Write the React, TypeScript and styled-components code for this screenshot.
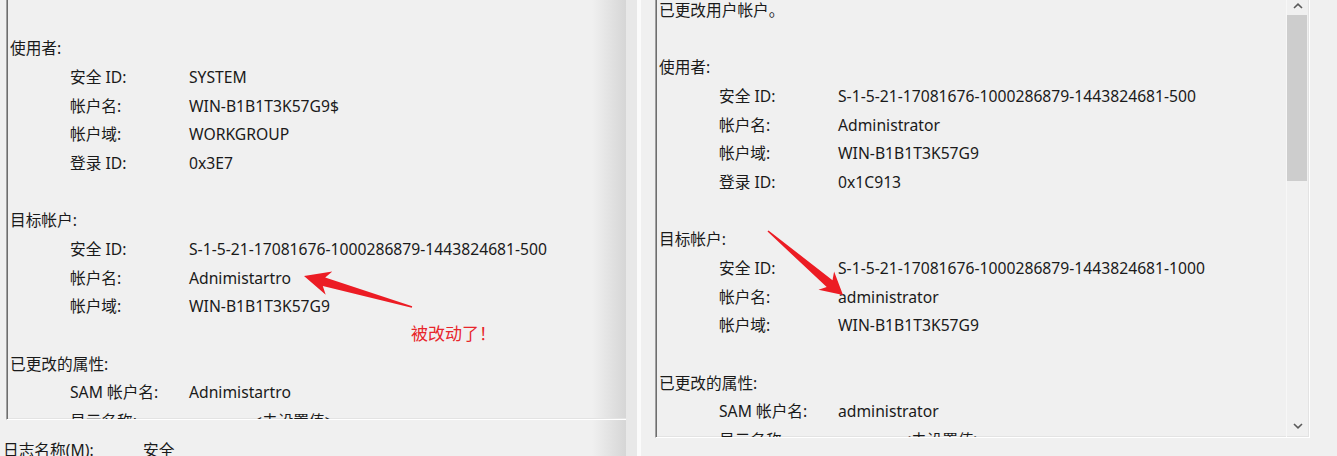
import React from "react";
import styled, { createGlobalStyle } from "styled-components";

const FONT = `"Noto Sans", "Noto Sans CJK SC", sans-serif`;

const GlobalStyle = createGlobalStyle`
  html, body { margin: 0; padding: 0; background: #f0f0f0; }
  body { width: 1337px; height: 456px; overflow: hidden; font-family: ${FONT}; }
  * { box-sizing: border-box; }
`;

const Screen = styled.div`
  position: relative;
  display: flex;
  width: 1337px;
  height: 456px;
  overflow: hidden;
  background: #f0f0f0;
  color: #1a1a1a;
  font-family: ${FONT};
  font-size: 15.7px;
`;

const LeftPane = styled.section`
  width: 626px;
  flex: none;
  display: flex;
  flex-direction: column;
  overflow: hidden;
  background: linear-gradient(
    to right,
    #f0f0f0 0,
    #f0f0f0 calc(100% - 34px),
    #d6d6d6 100%
  );
`;

const Splitter = styled.div`
  width: 15px;
  flex: none;
  background: #e8e8e8;
  border-right: 4px solid #fbfbfb;
`;

const RightPane = styled.section`
  flex: 1;
  display: flex;
  flex-direction: column;
  padding-left: 14px;
`;

const DetailBox = styled.div<{ $height: number; $closed?: boolean }>`
  height: ${(p) => p.$height}px;
  flex: none;
  display: flex;
  overflow: hidden;
  border-left: 1px solid #a0a0a0;
  border-bottom: 1px solid #ffffff;
  border-right: ${(p) => (p.$closed ? "1px solid #ffffff" : "none")};
  box-shadow: inset 1px 0 0 #6e6e6e, inset 0 -1px 0 #e3e3e3
    ${(p) => (p.$closed ? ", inset -1px 0 0 #e3e3e3" : "")};
`;

const LeftBox = styled(DetailBox)`
  margin-left: 6px;
`;

const RightBox = styled(DetailBox)`
  width: 655px;
`;

const TextArea = styled.div`
  flex: 1;
  min-width: 0;
  overflow: hidden;
  padding-left: 3px;
`;

const TextFlow = styled.div<{ $scroll: number }>`
  margin-top: ${(p) => -p.$scroll}px;
`;

const Line = styled.div`
  height: 28.67px;
  line-height: 28.67px;
  white-space: nowrap;
`;

const FieldLine = styled(Line)`
  display: flex;
  padding-left: 60px;
`;

const FieldLabel = styled.span`
  width: 119px;
  flex: none;
`;

const FieldValue = styled.span<{ $indent?: number }>`
  padding-left: ${(p) => p.$indent ?? 0}px;
`;

const ScrollBar = styled.div`
  width: 22px;
  flex: none;
  margin-right: 1px;
  display: flex;
  flex-direction: column;
  border-left: 1px solid #f7f7f7;
`;

const ScrollButton = styled.div<{ $h: number }>`
  height: ${(p) => p.$h}px;
  flex: none;
  display: flex;
  align-items: center;
  justify-content: center;
  padding-bottom: 4px;
`;

const ScrollThumb = styled.div`
  width: 20px;
  height: 166px;
  background: #cdcdcd;
  flex: none;
`;

const ScrollTrack = styled.div`
  flex: 1;
`;

const BottomField = styled.div`
  display: flex;
  padding-left: 3px;
  margin-top: 16px;
  line-height: 28.67px;
  white-space: nowrap;
`;

const BottomLabel = styled.span`
  width: 140px;
  flex: none;
`;

const Overlay = styled.svg`
  position: absolute;
  left: 0;
  top: 0;
  pointer-events: none;
`;

const Note = styled.div`
  position: absolute;
  left: 411px;
  top: 322px;
  font-family: "Noto Sans CJK SC", sans-serif;
  font-size: 17px;
  line-height: 22px;
  color: #e8252b;
  white-space: nowrap;
`;

type Entry =
  | { kind: "title"; text: string }
  | { kind: "blank" }
  | { kind: "field"; label: string; value: string; indent?: number };

const makeEntries = (
  subject: [string, string, string, string],
  target: [string, string, string],
  sam: string
): Entry[] => [
  { kind: "title", text: "已更改用户帐户。" },
  { kind: "blank" },
  { kind: "title", text: "使用者:" },
  { kind: "field", label: "安全 ID:", value: subject[0] },
  { kind: "field", label: "帐户名:", value: subject[1] },
  { kind: "field", label: "帐户域:", value: subject[2] },
  { kind: "field", label: "登录 ID:", value: subject[3] },
  { kind: "blank" },
  { kind: "title", text: "目标帐户:" },
  { kind: "field", label: "安全 ID:", value: target[0] },
  { kind: "field", label: "帐户名:", value: target[1] },
  { kind: "field", label: "帐户域:", value: target[2] },
  { kind: "blank" },
  { kind: "title", text: "已更改的属性:" },
  { kind: "field", label: "SAM 帐户名:", value: sam },
  { kind: "field", label: "显示名称:", value: "<未设置值>", indent: 64 },
  { kind: "field", label: "用户主体名称:", value: "-", indent: 64 },
];

const leftEntries = makeEntries(
  ["SYSTEM", "WIN-B1B1T3K57G9$", "WORKGROUP", "0x3E7"],
  [
    "S-1-5-21-17081676-1000286879-1443824681-500",
    "Adnimistartro",
    "WIN-B1B1T3K57G9",
  ],
  "Adnimistartro"
);

const rightEntries = makeEntries(
  [
    "S-1-5-21-17081676-1000286879-1443824681-500",
    "Administrator",
    "WIN-B1B1T3K57G9",
    "0x1C913",
  ],
  [
    "S-1-5-21-17081676-1000286879-1443824681-1000",
    "administrator",
    "WIN-B1B1T3K57G9",
  ],
  "administrator"
);

const EventText: React.FC<{ entries: Entry[]; scroll: number }> = ({
  entries,
  scroll,
}) => (
  <TextArea>
    <TextFlow $scroll={scroll}>
      {entries.map((e, i) => {
        if (e.kind === "title") return <Line key={i}>{e.text}</Line>;
        if (e.kind === "blank") return <Line key={i} />;
        return (
          <FieldLine key={i}>
            <FieldLabel>{e.label}</FieldLabel>
            <FieldValue $indent={e.indent}>{e.value}</FieldValue>
          </FieldLine>
        );
      })}
    </TextFlow>
  </TextArea>
);

const Chevron: React.FC<{ up?: boolean }> = ({ up }) => (
  <svg width="10" height="6" viewBox="0 0 10 6">
    <polyline
      points={up ? "1,5 5,1.2 9,5" : "1,1 5,4.8 9,1"}
      fill="none"
      stroke="#5a5a5a"
      strokeWidth="1.6"
    />
  </svg>
);

type Pt = [number, number];

const arrowPoints = (tip: Pt, tail: Pt, headLen: number, headHalf: number, neckHalf: number): string => {
  const dx = tail[0] - tip[0];
  const dy = tail[1] - tip[1];
  const len = Math.hypot(dx, dy);
  const ux = dx / len;
  const uy = dy / len;
  const nx = -uy;
  const ny = ux;
  const at = (a: number, b: number): Pt => [
    tip[0] + ux * a + nx * b,
    tip[1] + uy * a + ny * b,
  ];
  const pts: Pt[] = [
    tip,
    at(headLen, -headHalf),
    at(headLen * 0.8, -neckHalf),
    at(len, -0.8),
    at(len, 0.8),
    at(headLen * 0.8, neckHalf),
    at(headLen, headHalf),
  ];
  return pts.map((p) => `${p[0].toFixed(1)},${p[1].toFixed(1)}`).join(" ");
};

export default function App() {
  return (
    <>
      <GlobalStyle />
      <Screen>
        <LeftPane>
          <LeftBox $height={420}>
            <EventText entries={leftEntries} scroll={23} />
          </LeftBox>
          <BottomField>
            <BottomLabel>日志名称(M):</BottomLabel>
            <span>安全</span>
          </BottomField>
        </LeftPane>
        <Splitter />
        <RightPane>
          <RightBox $height={438} $closed>
            <EventText entries={rightEntries} scroll={4} />
            <ScrollBar>
              <ScrollButton $h={15}>
                <Chevron up />
              </ScrollButton>
              <ScrollThumb />
              <ScrollTrack />
              <ScrollButton $h={19}>
                <Chevron />
              </ScrollButton>
            </ScrollBar>
          </RightBox>
        </RightPane>
        <Overlay width="1337" height="456" viewBox="0 0 1337 456">
          <polygon
            points={arrowPoints([304, 276], [412, 307], 26, 12, 4.5)}
            fill="#ec1c24"
          />
          <polygon
            points={arrowPoints([843, 295], [768, 231], 22, 12, 4.5)}
            fill="#ec1c24"
          />
        </Overlay>
        <Note>被改动了！</Note>
      </Screen>
    </>
  );
}
